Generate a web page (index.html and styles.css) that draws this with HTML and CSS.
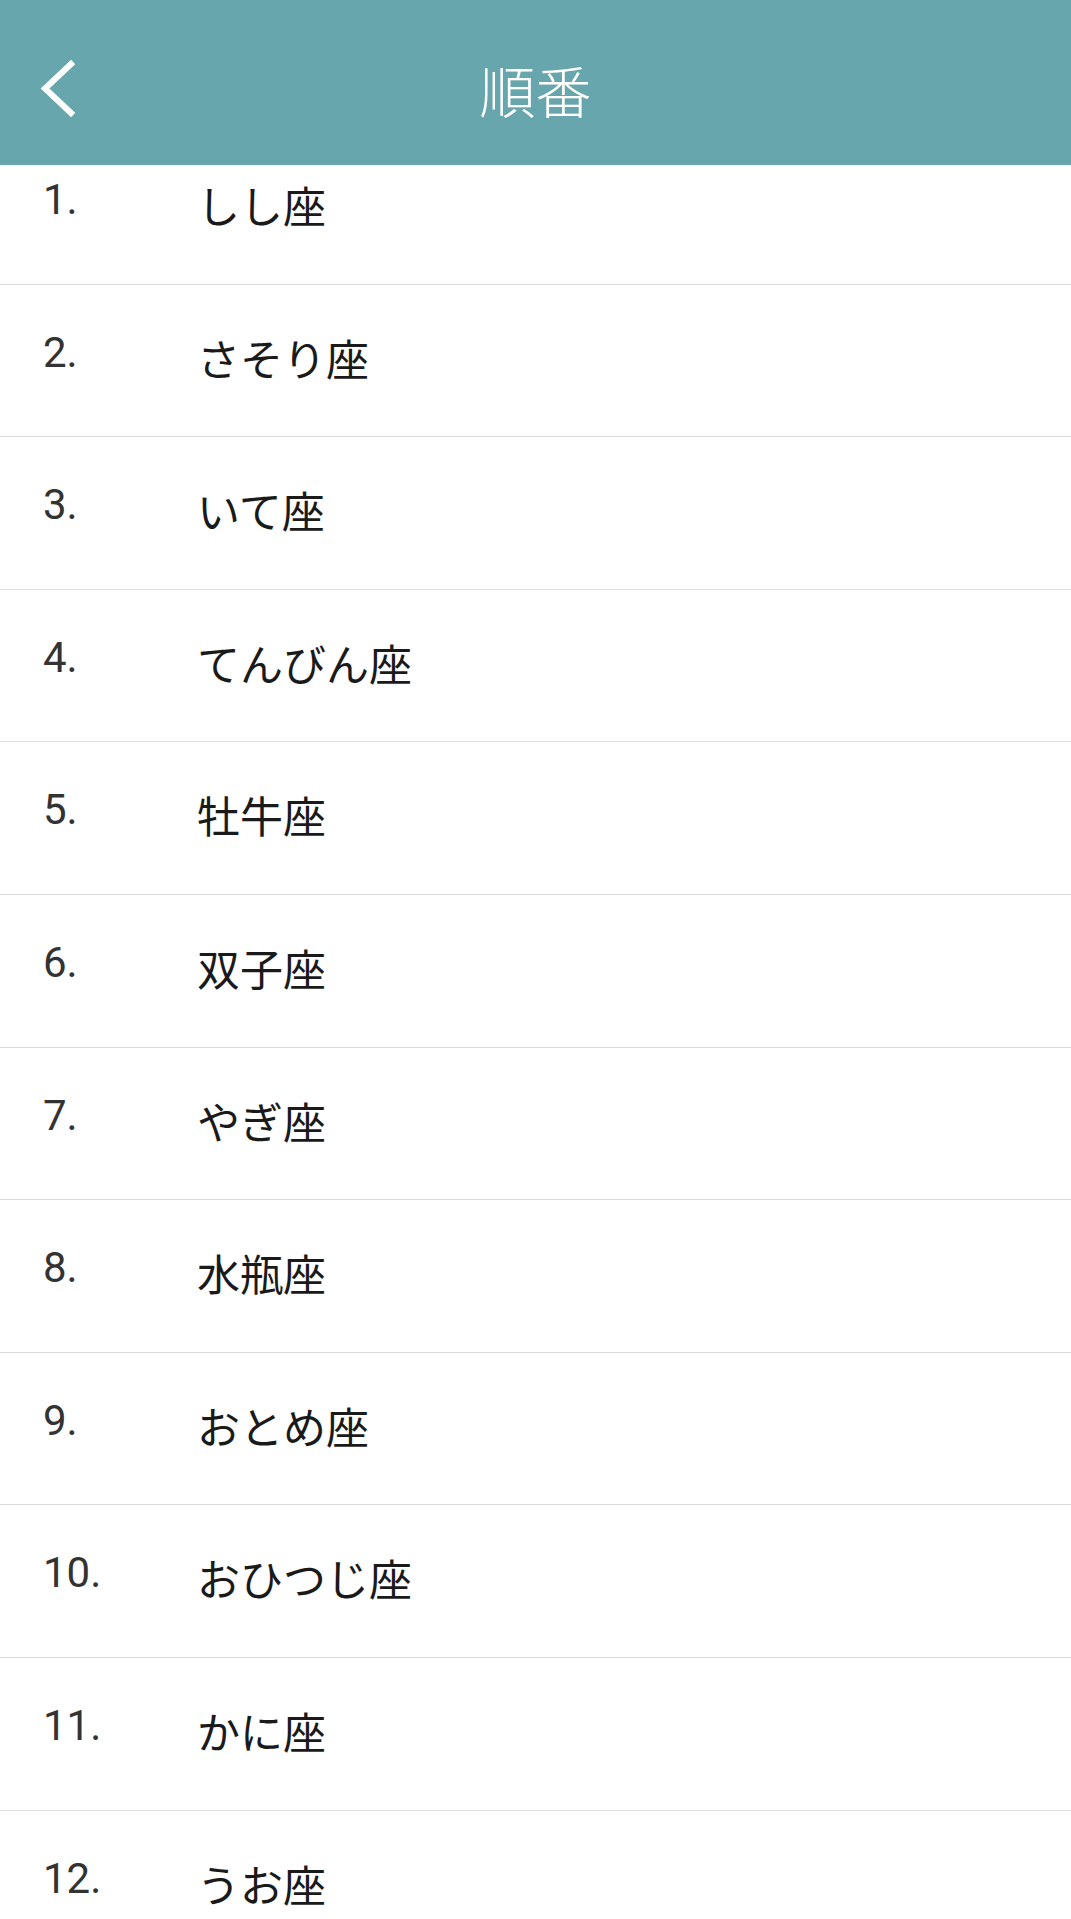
FILE: index.html
```html
<!DOCTYPE html>
<html lang="ja">

<head>
  <meta charset="UTF-8" />
  <meta name="viewport" content="width=device-width, initial-scale=1.0" />
  <title>順番</title>
  <link rel="stylesheet" href="styles.css">
</head>

<body>
  <div class="header">
    <button class="back-button" aria-label="back">
      <svg width="40" height="60" viewBox="0 0 40 60">
        <path d="M31 5 L5 29.5 L31 54" fill="none" stroke="#fff" stroke-width="6" stroke-linecap="square" />
      </svg>
    </button>
    <p class="title">順番</p>
    <div></div>
  </div>

  <div class="list">
    <div class="rows">
      <div class="row"><span class="num">1.</span><span class="name">しし座</span></div>
      <div class="row"><span class="num">2.</span><span class="name">さそり座</span></div>
      <div class="row"><span class="num">3.</span><span class="name">いて座</span></div>
      <div class="row"><span class="num">4.</span><span class="name">てんびん座</span></div>
      <div class="row"><span class="num">5.</span><span class="name">牡牛座</span></div>
      <div class="row"><span class="num">6.</span><span class="name">双子座</span></div>
      <div class="row"><span class="num">7.</span><span class="name">やぎ座</span></div>
      <div class="row"><span class="num">8.</span><span class="name">水瓶座</span></div>
      <div class="row"><span class="num">9.</span><span class="name">おとめ座</span></div>
      <div class="row"><span class="num">10.</span><span class="name">おひつじ座</span></div>
      <div class="row"><span class="num">11.</span><span class="name">かに座</span></div>
      <div class="row"><span class="num">12.</span><span class="name">うお座</span></div>
    </div>
  </div>
</body>

</html>
```

FILE: styles.css
```css
body {
  margin: 0;
  background-color: #fff;
  font-family: Roboto, "Noto Sans CJK JP", sans-serif;
}

.header {
  position: relative;
  z-index: 1;
  height: 165px;
  box-sizing: border-box;
  padding-top: 12px;
  background-color: #68a6ad;
  display: grid;
  grid-template-columns: 1fr auto 1fr;
  align-items: center;
}

.back-button {
  justify-self: start;
  margin: 0 0 0 40px;
  padding: 0;
  border: none;
  background: none;
  display: flex;
}

.title {
  margin: 0;
  color: #fff;
  font-family: "Noto Sans CJK JP", sans-serif;
  font-size: 56px;
  font-weight: 300;
  line-height: 1;
}

.list {
  height: 1754px;
  overflow: hidden;
}

.rows {
  margin-top: -33px;
}

.row {
  height: 151.6px;
  border-bottom: 1px solid #dcdcdc;
  display: flex;
  align-items: flex-start;
  padding-left: 43px;
  box-sizing: content-box;
}

.num {
  width: 154px;
  padding-top: 43px;
  color: #333;
  font-family: Roboto, sans-serif;
  font-size: 42px;
}

.name {
  padding-top: 51px;
  color: #1a1a1a;
  font-family: "Noto Sans CJK JP", sans-serif;
  font-size: 43px;
  line-height: 1;
}
```
